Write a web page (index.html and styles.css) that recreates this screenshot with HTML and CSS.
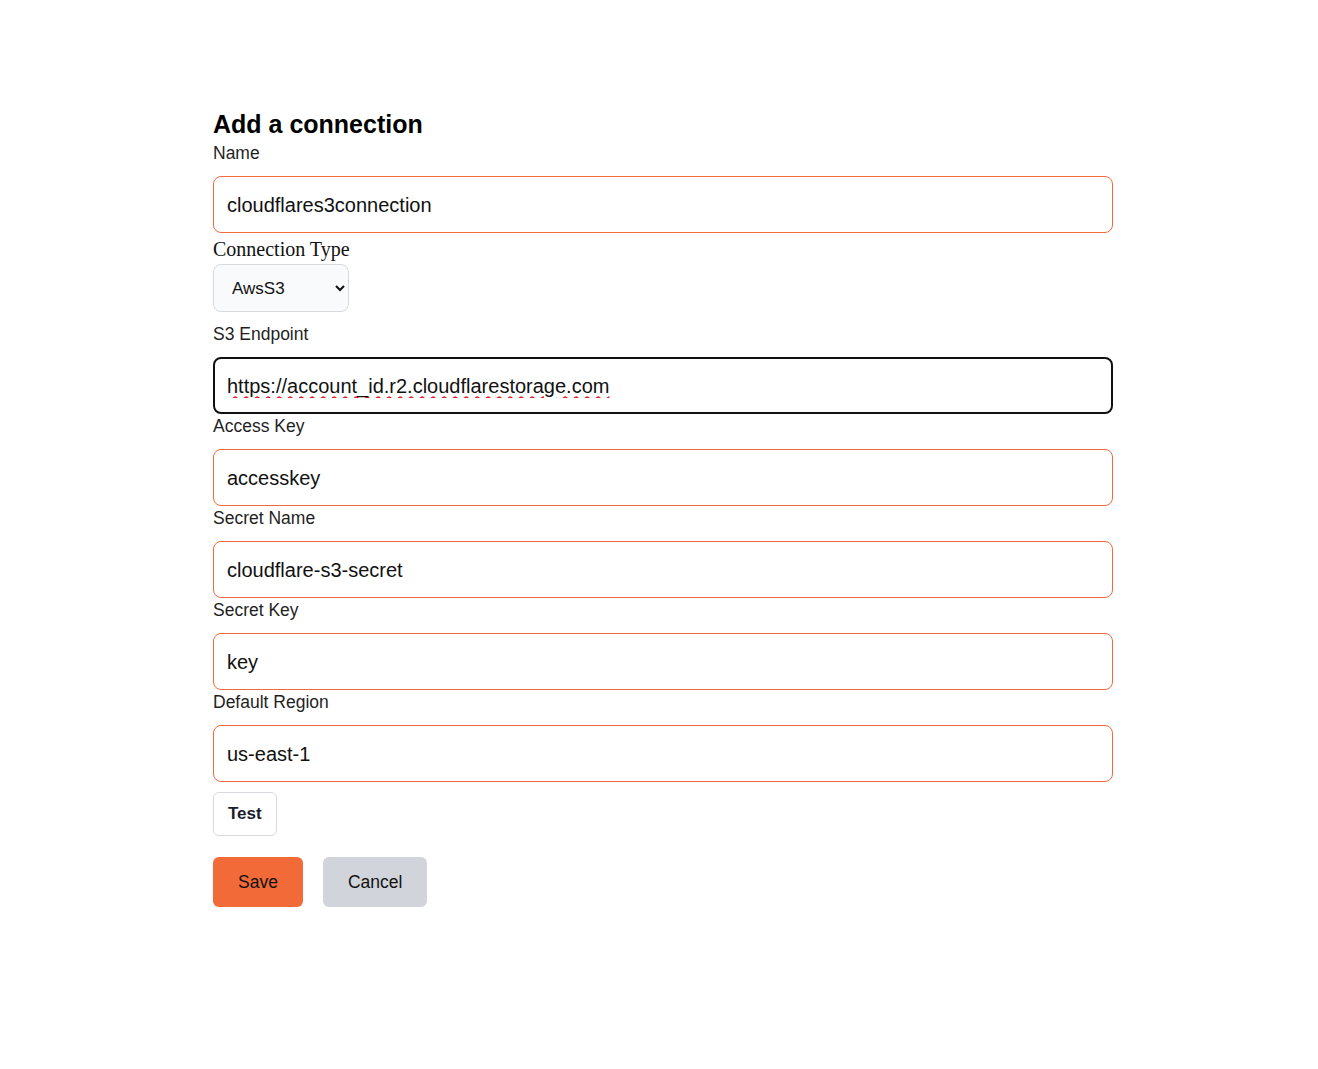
FILE: index.html
```html
<!DOCTYPE html>
<html lang="en">
<head>
    <meta charset="UTF-8">
    <meta name="viewport" content="width=device-width, initial-scale=1.0">
    <title>Add a connection</title>
    <link rel="stylesheet" href="styles.css">
</head>
<body>

    <div class="page">
        <h1>Add a connection</h1>

        <form id="connectionForm" class="connection-form">
            <!-- Name -->
            <label for="name" class="field-label">Name</label>
            <input type="text" id="name" name="name" class="input-field" value="cloudflares3connection">

            <!-- Type -->
            <label for="type" class="type-label">Connection Type</label>
            <select id="type" name="type" class="select-field">
                <option value="AwsS3">AwsS3</option>
                <option value="Azure">Azure</option>
                <option value="Gcs">Gcs</option>
            </select>

            <!-- S3 settings -->
            <label for="endpoint" class="field-label spaced">S3 Endpoint</label>
            <input type="text" id="endpoint" name="endpoint" class="input-field active" value="https://account_id.r2.cloudflarestorage.com">

            <label for="accessKey" class="field-label">Access Key</label>
            <input type="text" id="accessKey" name="accessKey" class="input-field" value="accesskey">

            <label for="secretName" class="field-label">Secret Name</label>
            <input type="text" id="secretName" name="secretName" class="input-field" value="cloudflare-s3-secret">

            <label for="secretKey" class="field-label">Secret Key</label>
            <input type="text" id="secretKey" name="secretKey" class="input-field" value="key">

            <label for="region" class="field-label">Default Region</label>
            <input type="text" id="region" name="region" class="input-field" value="us-east-1">

            <div class="test-row">
                <button type="button" class="test-button">Test</button>
            </div>

            <div class="actions">
                <button type="submit" class="save-button">Save</button>
                <button type="button" class="cancel-button">Cancel</button>
            </div>
        </form>
    </div>

</body>
</html>
```

FILE: styles.css
```css
/* Basic Styles */
body {
    font-family: 'Liberation Sans', Arial, sans-serif;
    background-color: #ffffff;
    color: #111111;
    margin: 0;
    padding: 0;
}

.page {
    width: 900px;
    margin-left: 213px;
    padding-top: 108px;
}

h1 {
    font-size: 25px;
    line-height: 33px;
    font-weight: bold;
    margin: 0;
    color: #000;
}

.connection-form {
    display: flex;
    flex-direction: column;
    align-items: flex-start;
}

.field-label {
    display: block;
    font-size: 17.5px;
    line-height: 24px;
    color: #1f1f1f;
    margin-bottom: 11px;
}

.field-label.spaced {
    margin-top: 10px;
}

/* serif label, no font set on it in the app */
.type-label {
    display: block;
    font-family: 'Liberation Serif', 'Times New Roman', serif;
    font-size: 20px;
    line-height: 24px;
    margin-top: 4px;
    margin-bottom: 3px;
    color: #111;
}

.input-field {
    box-sizing: border-box;
    width: 900px;
    height: 57px;
    padding: 2px 13px 0;
    font-family: 'Liberation Sans', Arial, sans-serif;
    font-size: 20px;
    color: #111;
    border: 1px solid #f06a3c;
    border-radius: 8px;
    background-color: #fff;
    outline: none;
}

.input-field.active {
    border: 2px solid #111;
    padding: 2px 12px 0;
    text-decoration: underline wavy #e0202a;
    text-decoration-thickness: 1.5px;
    text-underline-offset: 3px;
}

.select-field {
    box-sizing: border-box;
    width: 136px;
    height: 48px;
    padding: 0 10px 0 14px;
    font-family: 'Liberation Sans', Arial, sans-serif;
    font-size: 17px;
    color: #111;
    background-color: #f9fafb;
    border: 1px solid #d6d9de;
    border-radius: 8px;
}

.test-row {
    margin-top: 10px;
}

.test-button {
    box-sizing: border-box;
    height: 44px;
    padding: 0 14px;
    font-family: 'Liberation Sans', Arial, sans-serif;
    font-size: 17px;
    font-weight: bold;
    color: #1a1c2e;
    background-color: #fff;
    border: 1px solid #d7d9e0;
    border-radius: 6px;
    cursor: pointer;
}

.actions {
    display: flex;
    gap: 20px;
    margin-top: 21px;
}

.save-button,
.cancel-button {
    box-sizing: border-box;
    height: 50px;
    padding: 0 25px;
    font-family: 'Liberation Sans', Arial, sans-serif;
    font-size: 17.5px;
    color: #111;
    border: none;
    border-radius: 6px;
    cursor: pointer;
}

.save-button {
    background-color: #f26a37;
}

.cancel-button {
    background-color: #d1d5db;
}
```
